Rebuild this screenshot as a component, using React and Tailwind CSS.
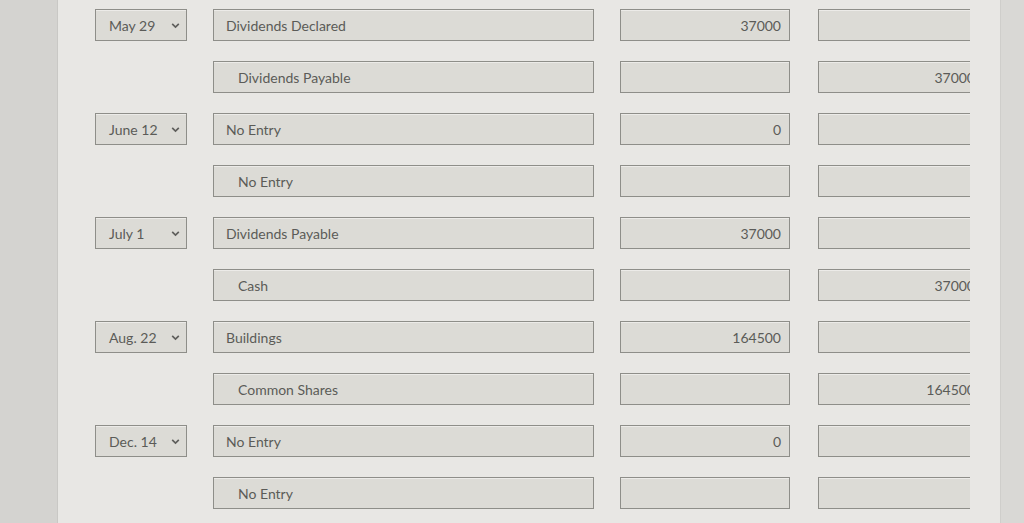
import React from "react";

const rows = [
  { date: "May 29", account: "Dividends Declared", debit: "37000", credit: "" },
  { account: "Dividends Payable", indent: true, debit: "", credit: "37000" },
  { date: "June 12", account: "No Entry", debit: "0", credit: "" },
  { account: "No Entry", indent: true, debit: "", credit: "" },
  { date: "July 1", account: "Dividends Payable", debit: "37000", credit: "" },
  { account: "Cash", indent: true, debit: "", credit: "37000" },
  { date: "Aug. 22", account: "Buildings", debit: "164500", credit: "" },
  { account: "Common Shares", indent: true, debit: "", credit: "164500" },
  { date: "Dec. 14", account: "No Entry", debit: "0", credit: "" },
  { account: "No Entry", indent: true, debit: "", credit: "" },
];

const Chevron = () => (
  <svg width="11" height="11" viewBox="0 0 10 10" className="text-[#5f5f5c]">
    <path d="M2 3.5 L5 6.5 L8 3.5" fill="none" stroke="currentColor" strokeWidth="1.5" />
  </svg>
);

const box = "h-[32px] bg-[#dcdbd6] border border-[#8e8e89] shadow-[inset_0_1px_0_#ecebe8]";

function EntryRow({ date, account, indent, debit, credit }) {
  return (
    <div className="flex items-center h-[32px]">
      <div className="w-[92px] ml-[37px]">
        {date && (
          <div className={`${box} flex items-center justify-between pl-[13px] pr-[5px]`}>
            <span>{date}</span>
            <Chevron />
          </div>
        )}
      </div>
      <div className={`${box} w-[381px] ml-[26px] flex items-center ${indent ? "pl-[24px]" : "pl-[12px]"}`}>
        {account}
      </div>
      <div className={`${box} w-[170px] ml-[26px] flex items-center justify-end pr-[8px]`}>
        {debit}
      </div>
      <div className="w-[152px] ml-[28px] overflow-hidden">
        <div className={`${box} w-[164px] flex items-center justify-end pr-[6px]`}>
          {credit}
        </div>
      </div>
    </div>
  );
}

export default function App() {
  return (
    <div
      className="w-full h-[523px] flex bg-[#e6e5e2] text-[14px] text-[#5b5b58] overflow-hidden"
      style={{ fontFamily: "Lato, 'Open Sans', sans-serif" }}
    >
      <div className="w-[58px] bg-[#d4d3d0] border-r border-[#c9c8c5]" />
      <div className="flex-1 flex flex-col gap-[20px] pt-[9px] bg-[#e8e7e4]">
        {rows.map((r, i) => (
          <EntryRow key={i} {...r} />
        ))}
      </div>
      <div className="w-[24px] bg-[#d9d8d5] border-l border-[#cfcecb]" />
    </div>
  );
}
